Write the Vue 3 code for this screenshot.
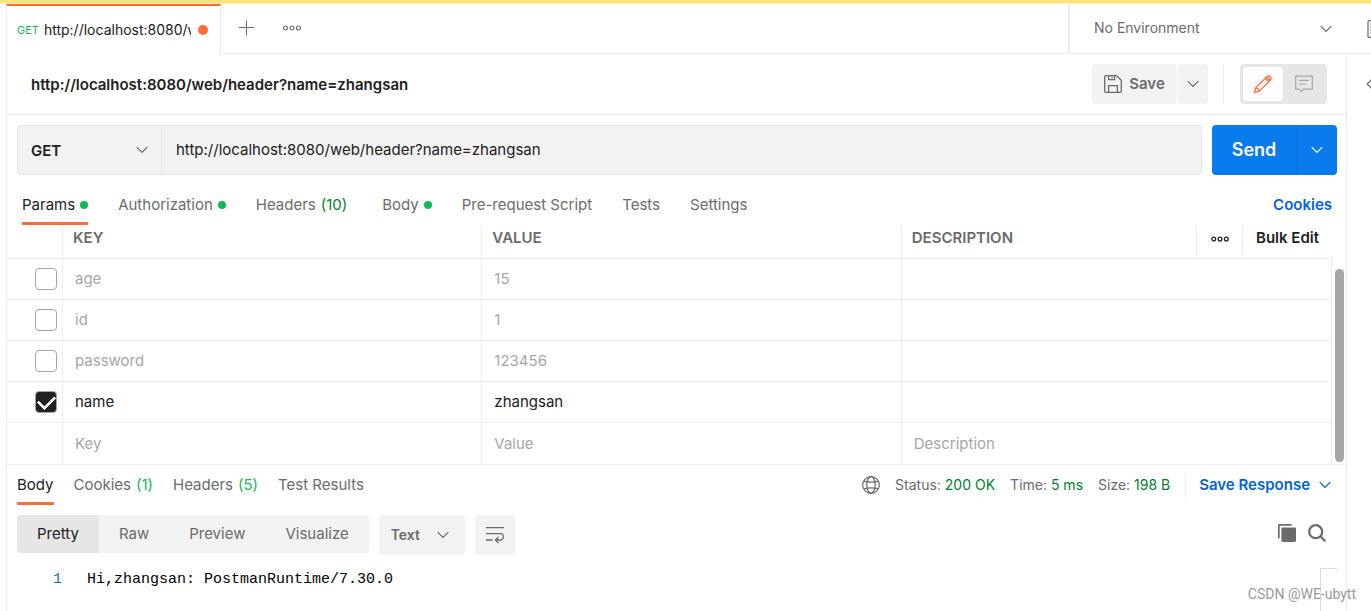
<script setup>
import { ref, reactive } from 'vue'

const url = ref('http://localhost:8080/web/header?name=zhangsan')
const method = ref('GET')
const environment = ref('none')
const format = ref('Text')

const requestTabs = [
  { label: 'Params', dot: true, active: true },
  { label: 'Authorization', dot: true },
  { label: 'Headers', count: '(10)' },
  { label: 'Body', dot: true },
  { label: 'Pre-request Script' },
  { label: 'Tests' },
  { label: 'Settings' }
]

const params = reactive([
  { key: 'age', value: '15', on: false },
  { key: 'id', value: '1', on: false },
  { key: 'password', value: '123456', on: false },
  { key: 'name', value: 'zhangsan', on: true }
])

const responseTabs = [
  { label: 'Body', active: true },
  { label: 'Cookies', count: '(1)' },
  { label: 'Headers', count: '(5)' },
  { label: 'Test Results' }
]

const stats = [
  { label: 'Status:', value: '200 OK' },
  { label: 'Time:', value: '5 ms' },
  { label: 'Size:', value: '198 B' }
]

const views = ['Pretty', 'Raw', 'Preview', 'Visualize']
</script>

<template>
  <div class="app">
    <div class="notice"></div>

    <header class="topbar">
      <div class="open-tab">
        <span class="open-method">GET</span>
        <span class="open-url">{{ url }}</span>
        <span class="unsaved"></span>
      </div>
      <div class="tab-actions">
        <button class="plain" aria-label="New tab">
          <svg width="16" height="16" viewBox="0 0 16 16" fill="none" stroke="#6b6b6b"><path d="M8.5 0.5v15M1 7.5h15" /></svg>
        </button>
        <button class="plain" aria-label="Tab options">
          <svg width="20" height="8" viewBox="0 0 20 8" fill="none" stroke="#6b6b6b" stroke-width="1.2"><circle cx="3.5" cy="4" r="2" /><circle cx="10" cy="4" r="2" /><circle cx="16.5" cy="4" r="2" /></svg>
        </button>
      </div>
      <div class="environment">
        <select v-model="environment" aria-label="Environment">
          <option value="none">No Environment</option>
        </select>
        <svg class="chevron" width="12" height="8" viewBox="0 0 12 8" fill="none" stroke="#6b6b6b" stroke-width="1.2"><path d="M0.7 1.2 6 6.5 11.3 1.2" /></svg>
      </div>
      <button class="plain quick-look" aria-label="Environment quick look">
        <svg width="18" height="18" viewBox="0 0 18 18" fill="none" stroke="#6b6b6b" stroke-width="1.2"><rect x="1" y="0.6" width="16" height="16.8" rx="1" /><path d="M3 4h2M3 7h2M3 10h2M3 13h2" /></svg>
      </button>
    </header>

    <div class="workspace">
      <main class="panel">
        <section class="title-row">
          <h1>{{ url }}</h1>
          <div class="split">
            <button class="save">
              <svg width="18" height="18" viewBox="0 0 18 18" fill="none" stroke="#6b6b6b" stroke-width="1.3"><path d="M0.7 1.5a.8.8 0 0 1 .8-.8h11.2l4.6 4.6v11.2a.8.8 0 0 1-.8.8h-15a.8.8 0 0 1-.8-.8z" /><path d="M4.6 0.7v4h6v-4M8 1.5v1.7M4.6 17.3v-6.6h8.8v6.6" /></svg>
              Save
            </button>
            <button class="save-more" aria-label="Save options">
              <svg width="12" height="8" viewBox="0 0 12 8" fill="none" stroke="#6b6b6b" stroke-width="1.2"><path d="M0.7 1.2 6 6.5 11.3 1.2" /></svg>
            </button>
          </div>
          <span class="divider"></span>
          <div class="mode">
            <button class="on" aria-label="Edit">
              <svg width="20" height="20" viewBox="0 0 20 20" fill="none" stroke="#ff6c37" stroke-width="1.3" stroke-linejoin="round"><path d="M1.6 18.400 2.600 13.900 14 2.500a2.500 2.500 0 0 1 3.500 3.500L6.100 17.400Z" /><path d="M12.300 4.200l3.500 3.500M14.300 2.400q.200 3 3.300 3.300M2.600 13.900q3.200.300 3.500 3.500" /></svg>
            </button>
            <button aria-label="Comments">
              <svg width="18" height="18" viewBox="0 0 18 18" fill="none" stroke="#a6a6a6" stroke-width="1.2" stroke-linejoin="round"><path d="M.7 1.2h16.6v13H8.6l-2.2 2.4-2.2-2.4H.7zM4 5.4h10M4 9h7" /></svg>
            </button>
          </div>
        </section>

        <section class="request-row">
          <div class="request-box">
            <div class="method">
              <select v-model="method" aria-label="Method">
                <option>GET</option>
                <option>POST</option>
              </select>
              <svg class="chevron" width="12" height="8" viewBox="0 0 12 8" fill="none" stroke="#6b6b6b" stroke-width="1.2"><path d="M0.7 1.2 6 6.5 11.3 1.2" /></svg>
            </div>
            <input v-model="url" type="text" aria-label="Request URL" />
          </div>
          <div class="send-group">
            <button class="send">Send</button>
            <button class="send-more" aria-label="Send options">
              <svg width="12" height="8" viewBox="0 0 12 8" fill="none" stroke="#fff" stroke-width="1.2"><path d="M0.7 1.2 6 6.5 11.3 1.2" /></svg>
            </button>
          </div>
        </section>

        <nav class="tabs request-tabs">
          <button v-for="t in requestTabs" :key="t.label" class="tab" :class="{ active: t.active, counted: t.count }">
            {{ t.label }}<span v-if="t.count" class="count dark">{{ t.count }}</span><span v-if="t.dot" class="dot"></span>
          </button>
          <a href="#" class="cookies">Cookies</a>
        </nav>

        <section class="params">
          <table>
            <colgroup>
              <col class="c-check" />
              <col class="c-key" />
              <col class="c-key" />
              <col />
              <col class="c-dots" />
              <col class="c-bulk" />
            </colgroup>
            <thead>
              <tr>
                <th aria-label="Enabled"></th>
                <th>KEY</th>
                <th>VALUE</th>
                <th>DESCRIPTION</th>
                <th class="center">
                  <button class="plain" aria-label="Columns">
                    <svg width="18" height="8" viewBox="0 0 18 8" fill="none" stroke="#212121" stroke-width="1.3"><circle cx="2.7" cy="4" r="1.9" /><circle cx="9" cy="4" r="1.9" /><circle cx="15.3" cy="4" r="1.9" /></svg>
                  </button>
                </th>
                <th class="center"><button class="plain bulk">Bulk Edit</button></th>
              </tr>
            </thead>
            <tbody>
              <tr v-for="p in params" :key="p.key" :class="{ enabled: p.on }">
                <td class="check"><input v-model="p.on" type="checkbox" :aria-label="'Use ' + p.key" /></td>
                <td><input v-model="p.key" type="text" aria-label="Key" /></td>
                <td><input v-model="p.value" type="text" aria-label="Value" /></td>
                <td colspan="3"></td>
              </tr>
              <tr class="blank">
                <td></td>
                <td><input type="text" placeholder="Key" aria-label="New key" /></td>
                <td><input type="text" placeholder="Value" aria-label="New value" /></td>
                <td colspan="3"><input type="text" placeholder="Description" aria-label="New description" /></td>
              </tr>
            </tbody>
          </table>
          <div class="track"><div class="thumb"></div></div>
        </section>

        <section class="response-head">
          <nav class="tabs response-tabs">
            <button v-for="t in responseTabs" :key="t.label" class="tab" :class="{ active: t.active }">
              {{ t.label }}<span v-if="t.count" class="count">{{ t.count }}</span>
            </button>
          </nav>
          <div class="stats">
            <svg width="18" height="18" viewBox="0 0 18 18" fill="none" stroke="#6b6b6b" stroke-width="1.2"><circle cx="9" cy="9" r="8.3" /><ellipse cx="9" cy="9" rx="4.2" ry="8.3" /><path d="M1.9 5.2Q9 7.2 16.1 5.2M1.9 12.8Q9 10.8 16.1 12.8" /></svg>
            <span v-for="s in stats" :key="s.label" class="stat">{{ s.label }} <b>{{ s.value }}</b></span>
            <button class="save-response">
              Save Response
              <svg width="12" height="8" viewBox="0 0 12 8" fill="none" stroke="#0265d2" stroke-width="1.2"><path d="M0.7 1.2 6 6.5 11.3 1.2" /></svg>
            </button>
          </div>
        </section>

        <section class="view-row">
          <div class="views">
            <button v-for="(v, i) in views" :key="v" :class="{ on: i === 0 }">{{ v }}</button>
          </div>
          <div class="format">
            <select v-model="format" aria-label="Format">
              <option>Text</option>
              <option>JSON</option>
            </select>
            <svg class="chevron" width="12" height="8" viewBox="0 0 12 8" fill="none" stroke="#6b6b6b" stroke-width="1.2"><path d="M0.7 1.2 6 6.5 11.3 1.2" /></svg>
          </div>
          <button class="wrap" aria-label="Wrap lines">
            <svg width="18" height="18" viewBox="0 0 18 18" fill="none" stroke="#6b6b6b" stroke-width="1.3"><path d="M0 1.7h18M0 7.7h14.2a3.1 3.1 0 0 1 0 6.3H9.8M0 14h6.5M12.6 10.8 9.5 14l3.1 3.2" /></svg>
          </button>
          <div class="tools">
            <button class="plain" aria-label="Copy">
              <svg width="18" height="18" viewBox="0 0 18 18" fill="#6b6b6b"><rect x="3.4" y="3.4" width="14.6" height="14.6" rx="1.4" /><path d="M0 1.4A1.4 1.4 0 0 1 1.4 0H13.6v1.7H1.7V14.2H0z" /></svg>
            </button>
            <button class="plain" aria-label="Search">
              <svg width="18" height="18" viewBox="0 0 18 18" fill="none" stroke="#6b6b6b" stroke-width="2.2"><circle cx="7.7" cy="7.7" r="6.5" /><path d="M12.3 12.3 17.2 17.2" /></svg>
            </button>
          </div>
        </section>

        <div class="code">
          <span class="line-no">1</span>
          <code>Hi,zhangsan: PostmanRuntime/7.30.0</code>
        </div>
        <div class="minimap"></div>
      </main>
      <aside class="rail">
        <button class="plain" aria-label="Expand sidebar">
          <svg width="8" height="12" viewBox="0 0 8 12" fill="none" stroke="#6b6b6b" stroke-width="1.3"><path d="M6.5 0.7 1.2 6 6.5 11.3" /></svg>
        </button>
      </aside>
    </div>
    <div class="watermark">CSDN @WE-ubytt</div>
  </div>
</template>

<style>
body {
  margin: 0;
  background: #fff;
}
</style>

<style scoped>
.app,
.app * {
  box-sizing: border-box;
}
.app {
  position: relative;
  display: flex;
  flex-direction: column;
  height: 100vh;
  overflow: hidden;
  font-family: Inter, "Liberation Sans", sans-serif;
  font-size: 15px;
  line-height: 20px;
  color: #212121;
}
button,
input,
select {
  margin: 0;
  padding: 0;
  border: 0;
  border-radius: 0;
  background: none;
  font: inherit;
  color: inherit;
  outline: none;
}
select {
  appearance: none;
  width: 100%;
  height: 100%;
}
svg {
  display: block;
  flex: none;
}
.chevron {
  position: absolute;
  top: 50%;
  margin-top: -4px;
  pointer-events: none;
}
.notice {
  flex: none;
  height: 4px;
  background: #ffe47e;
  border-bottom: 1px solid #fff3c4;
}

.topbar {
  display: flex;
  flex: none;
  height: 50px;
  margin-left: 6px;
}
.open-tab {
  display: flex;
  align-items: center;
  width: 215px;
  padding: 0 12px 0 10px;
  border-top: 2px solid #ff6c37;
  border-left: 1px solid #ededed;
  border-right: 1px solid #ededed;
}
.open-method {
  margin-right: 5px;
  font-size: 11px;
  color: #22b35e;
}
.open-url {
  flex: 1;
  overflow: hidden;
  white-space: nowrap;
  font-size: 14px;
}
.unsaved {
  width: 10px;
  height: 10px;
  margin-left: 7px;
  border-radius: 50%;
  background: #ff6c37;
}
.tab-actions {
  display: flex;
  flex: 1;
  align-items: center;
  gap: 28px;
  padding: 0 0 1px 17px;
  border-bottom: 1px solid #ededed;
}
.environment {
  position: relative;
  width: 278px;
  border-left: 2px solid #ededed;
  border-bottom: 1px solid #ededed;
  font-size: 14px;
  color: #6b6b6b;
}
.environment select {
  padding: 0 0 2px 24px;
}
.environment .chevron {
  right: 14px;
}
.quick-look {
  width: 25px;
  padding-left: 21px;
  overflow: hidden;
  border-bottom: 1px solid #ededed;
}

.workspace {
  display: flex;
  flex: 1;
  min-height: 0;
  margin-left: 6px;
}
.panel {
  position: relative;
  flex: 1;
  min-width: 0;
  border-left: 1px solid #ededed;
  border-right: 1px solid #ededed;
}
.rail {
  flex: none;
  width: 24px;
  padding: 21px 0 0 19px;
  overflow: hidden;
}

.title-row {
  display: flex;
  align-items: center;
  height: 61px;
  padding: 0 19px 0 24px;
  border-bottom: 1px solid #ededed;
}
h1 {
  flex: 1;
  margin: 0;
  padding-top: 2px;
  font-size: 15px;
  font-weight: 600;
}
.split {
  display: flex;
  gap: 1px;
}
.split button {
  display: flex;
  align-items: center;
  justify-content: center;
  height: 40px;
  background: #f2f2f2;
  font-weight: 600;
  color: #6b6b6b;
}
.split .save {
  gap: 7px;
  width: 85px;
  border-radius: 4px;
}
.split .save-more {
  width: 30px;
  border-radius: 4px;
}
.divider {
  width: 1px;
  height: 40px;
  margin: 0 16px 0 15px;
  background: #ededed;
}
.mode {
  display: flex;
  height: 40px;
  padding: 3px;
  border-radius: 4px;
  background: #e6e6e6;
}
.mode button {
  display: flex;
  align-items: center;
  justify-content: center;
  width: 41px;
}
.mode .on {
  width: 40px;
  border-radius: 4px;
  background: #fff;
}

.request-row {
  display: flex;
  gap: 10px;
  padding: 10px 9px 0 10px;
}
.request-box {
  display: flex;
  flex: 1;
  height: 50px;
  border: 1px solid #e6e6e6;
  border-radius: 4px;
  background: #f2f2f2;
}
.method {
  position: relative;
  width: 144px;
  border-right: 1px solid #e6e6e6;
  font-weight: 600;
}
.method select {
  padding: 2px 0 0 13px;
}
.method .chevron {
  right: 13px;
}
.request-box input {
  flex: 1;
  padding-left: 14px;
}
.send-group {
  display: flex;
  height: 50px;
  border-radius: 4px;
  overflow: hidden;
  background: #097bed;
  color: #fff;
}
.send {
  width: 84px;
  font-size: 18px;
  font-weight: 600;
}
.send-more {
  display: flex;
  align-items: center;
  justify-content: center;
  width: 41px;
  border-left: 1px solid #0a6fd3;
}

.tabs {
  display: flex;
}
.tab {
  display: flex;
  align-items: center;
  height: 40px;
  padding-top: 2px;
  border-bottom: 3px solid transparent;
  color: #6b6b6b;
  white-space: nowrap;
}
.tab.active {
  border-bottom-color: #ff6c37;
  color: #212121;
}
.count {
  margin-left: 5px;
  color: #22b35e;
}
.count.dark {
  color: #007f31;
}
.dot {
  width: 8px;
  height: 8px;
  margin-left: 4px;
  border-radius: 50%;
  background: #0cbb52;
}
.request-tabs {
  gap: 30px;
  padding: 10px 14px 0 15px;
}
.request-tabs .dot {
  margin-left: 5px;
}
.tab.counted {
  padding-right: 1px;
}
.request-tabs .counted {
  padding-right: 5px;
}
.cookies {
  margin-left: auto;
  padding-top: 10px;
  font-weight: 600;
  color: #0265d2;
  text-decoration: none;
}

.params {
  display: flex;
  border-bottom: 1px solid #ededed;
}
table {
  flex: 1;
  table-layout: fixed;
  border-collapse: separate;
  border-spacing: 0;
}
.c-check {
  width: 56px;
}
.c-key {
  width: 31.65%;
}
.c-dots {
  width: 46px;
}
.c-bulk {
  width: 89px;
}
th,
td {
  padding: 0 0 0 12px;
  border-right: 1px solid #ededed;
  border-bottom: 1px solid #ededed;
  text-align: left;
}
th {
  height: 34px;
  padding: 0 0 8px 10px;
  font-size: 15px;
  font-weight: 600;
  color: #6b6b6b;
}
th:last-child {
  border-right: 0;
}
th.center {
  padding-left: 0;
  text-align: center;
}
th.center svg {
  margin: 0 auto;
}
.bulk {
  font-weight: 600;
  color: #212121;
}
td {
  height: 41px;
  color: #a6a6a6;
}
.enabled td {
  color: #212121;
}
.blank td {
  border-bottom: 0;
}
td input[type="text"] {
  display: block;
  width: 100%;
}
td input::placeholder {
  color: #a6a6a6;
  opacity: 1;
}
td.check {
  padding: 0 5px 0 28px;
}
td input[type="checkbox"] {
  appearance: none;
  display: block;
  width: 22px;
  height: 22px;
  border: 1px solid #a6a6a6;
  border-radius: 4px;
}
td input[type="checkbox"]:checked {
  display: flex;
  align-items: center;
  justify-content: center;
  background: #212121;
}
td input[type="checkbox"]:checked::before {
  content: "";
  width: 14px;
  height: 8px;
  margin-bottom: 4px;
  border: solid #fff;
  border-width: 0 0 3px 3px;
  border-radius: 1px;
  transform: rotate(-45deg);
}
.track {
  width: 14px;
  padding: 44px 2px 2px 3px;
}
.thumb {
  height: 100%;
  border-radius: 5px;
  background: #a6a6a6;
}

.response-head {
  display: flex;
  justify-content: space-between;
  padding: 0 15px 0 10px;
}
.response-tabs {
  gap: 20px;
}
.stats {
  display: flex;
  align-items: center;
  gap: 15px;
  font-size: 14px;
  color: #6b6b6b;
}
.stat b {
  font-weight: 400;
  color: #007f31;
}
.save-response {
  display: flex;
  align-items: center;
  gap: 9px;
  height: 25px;
  padding-left: 13px;
  border-left: 1px solid #ededed;
  font-size: 15px;
  font-weight: 600;
  color: #0265d2;
}

.view-row {
  display: flex;
  align-items: flex-start;
  gap: 10px;
  padding: 10px 20px 0 10px;
}
.views {
  display: flex;
  height: 38px;
  border-radius: 4px;
  overflow: hidden;
  background: #f2f2f2;
  color: #6b6b6b;
}
.views button {
  padding: 0 20px;
}
.views .on {
  background: #e6e6e6;
  color: #212121;
}
.format {
  position: relative;
  width: 86px;
  height: 40px;
  border-radius: 4px;
  background: #f2f2f2;
  font-size: 14px;
  font-weight: 600;
  color: #6b6b6b;
}
.format select {
  padding-left: 12px;
}
.format .chevron {
  right: 16px;
}
.wrap {
  display: flex;
  align-items: center;
  justify-content: center;
  width: 40px;
  height: 40px;
  border-radius: 4px;
  background: #f2f2f2;
}
.tools {
  display: flex;
  gap: 12px;
  margin-left: auto;
  padding-top: 9px;
}

.code {
  display: flex;
  padding-top: 15px;
  color: #000;
  font-family: "Liberation Mono", monospace;
}
.code code {
  font-family: inherit;
}
.line-no {
  width: 55px;
  margin-right: 25px;
  text-align: right;
  color: #237893;
}
.minimap {
  position: absolute;
  right: 9px;
  bottom: 0;
  width: 17px;
  height: 43px;
  border-top: 1px solid #dcdcdc;
  border-left: 1px solid #dcdcdc;
}
.watermark {
  position: absolute;
  right: 15px;
  bottom: 7px;
  font-family: Roboto, sans-serif;
  font-size: 14px;
  color: #999;
}
</style>
